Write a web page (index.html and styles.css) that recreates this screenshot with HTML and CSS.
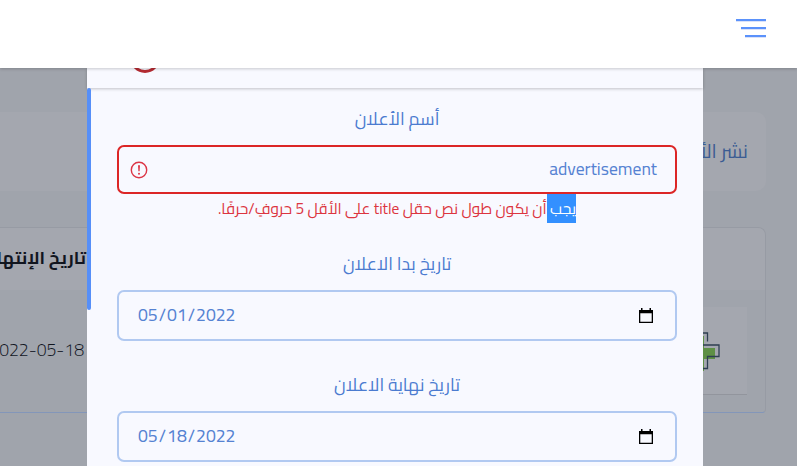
FILE: index.html
```html
<!DOCTYPE html>
<html lang="ar" dir="rtl">
<head>
<meta charset="utf-8">
<title>نشر الأعلان</title>
<link rel="stylesheet" href="styles.css">
</head>
<body>
<header class="topbar">
  <button class="menu" aria-label="القائمة"><i></i><i></i><i></i></button>
</header>
<main class="page">
  <section class="title-card"><h1>نشر الأعلان</h1></section>
  <section class="table-card">
    <div class="row head"><b class="cell-end">تاريخ الإنتهاء</b></div>
    <div class="row">
      <div class="thumb">
        <svg width="60" height="60" viewBox="0 0 60 60"><path fill="#5e9045" d="M15 15h16v12h11v11H31v12H15z"/><path fill="none" stroke="#2e3f52" stroke-width="1.3" d="M24 12h10.500v8.500M28 24h18v11.500H34.500v12H25"/></svg>
      </div>
      <span class="cell-end date">2022-05-18</span>
    </div>
  </section>
</main>
<div class="modal">
  <div class="modal-head"><div class="clip"><span class="close"></span></div></div>
  <form class="form">
    <div class="field">
      <label class="label">أسم الأعلان</label>
      <div class="input invalid">
        <span class="value">advertisement</span>
        <svg class="warn" width="18" height="18" viewBox="0 0 18 18"><circle cx="9" cy="9" r="7.700" fill="none" stroke="#dc3545" stroke-width="1.400"/><path d="M8 4.300h2l-.4 6H8.400z" fill="#dc3545"/><circle cx="9" cy="12.800" r="1" fill="#dc3545"/></svg>
      </div>
      <p class="error"><span><mark>يجب </mark>أن يكون طول نص حقل title على الأقل 5 حروفٍ/حرفًا.</span></p>
    </div>
    <div class="field">
      <label class="label">تاريخ بدا الاعلان</label>
      <div class="input" dir="ltr">
        <span class="value num"><span>05</span>/<span>01</span>/<span>2022</span></span>
        <svg class="cal" width="16" height="18" viewBox="0 0 16 18"><path d="M1 3h14v13H1zM2.300 6.300v8.400h11.400V6.300z" fill="#000" fill-rule="evenodd"/><path d="M3 1h1.500v3H3zM11.500 1H13v3h-1.500z" fill="#000"/></svg>
      </div>
    </div>
    <div class="field">
      <label class="label">تاريخ نهاية الاعلان</label>
      <div class="input" dir="ltr">
        <span class="value num"><span>05</span>/<span>18</span>/<span>2022</span></span>
        <svg class="cal" width="16" height="18" viewBox="0 0 16 18"><path d="M1 3h14v13H1zM2.300 6.300v8.400h11.400V6.300z" fill="#000" fill-rule="evenodd"/><path d="M3 1h1.500v3H3zM11.500 1H13v3h-1.500z" fill="#000"/></svg>
      </div>
    </div>
  </form>
  <span class="scroll-thumb"></span>
</div>
</body>
</html>
```
FILE: styles.css
```css
* { box-sizing: border-box; }
body { margin: 0; height: 466px; overflow: hidden; position: relative; background: #a0a4ac; font-family: Cairo, "Noto Sans", "Noto Sans Arabic", "DejaVu Sans", sans-serif; }
.topbar { position: relative; z-index: 3; height: 68px; background: #fff; box-shadow: 0 1px 3px rgba(0,0,0,.2); padding: 19px 31px; }
.menu { display: flex; flex-direction: column; align-items: flex-end; gap: 6px; border: 0; padding: 0; background: none; width: 30px; direction: ltr; }
.menu i { height: 2px; width: 30px; background: #5b92fb; box-shadow: 0 1px 0 #dbe2f8; }
.menu i:nth-child(2) { width: 25px; }
.menu i:nth-child(3) { width: 21px; }
.page { padding: 44px 31px 0 0; }
.title-card { height: 79px; background: #a4a7af; border-radius: 0 10px 10px 0; padding-right: 18px; display: flex; align-items: center; }
h1 { margin: 0; font-size: 19.2px; font-weight: 400; color: #3b5c93; position: relative; top: -1px; }
.table-card { margin-top: 36px; height: 186px; border: 1px solid #979ba4; border-left: 0; border-bottom-color: #8396b9; border-radius: 0 8px 4px 0; overflow: hidden; }
.row { display: flex; align-items: center; height: 122px; padding-right: 18px; color: #11151f; }
.head { height: 62px; background: #a4a7af; }
.thumb { width: 88px; height: 88px; background: #a4a7af; border-bottom: 1px solid #92959d; display: flex; justify-content: center; align-items: center; }
.cell-end { width: 86px; white-space: nowrap; margin-right: auto; font-size: 17.6px; line-height: 32px; margin-bottom: 2px; }
.date { direction: ltr; display: flex; justify-content: flex-end; width: 84px; font-size: 17.6px; font-weight: 300; }
.modal { position: absolute; z-index: 2; left: 87px; top: 68px; width: 616px; height: 398px; background: #f8f9ff; }
.modal-head { height: 20px; box-shadow: 0 1px 3px rgba(0,0,0,.22); }
.clip { height: 20px; overflow: hidden; display: flex; justify-content: flex-end; align-items: flex-end; padding: 0 43px 15px; }
.close { flex: none; width: 30px; height: 30px; border: 3px solid #b52b32; border-radius: 50%; }
.form { padding: 12px 26px 0 30px; }
.field { height: 121px; }
.field:first-child { height: 145px; }
.label { display: flex; justify-content: center; align-items: center; height: 36px; margin-bottom: 9px; color: #4b7bd0; font-size: 17.6px; }
.input { height: 51px; border: 2px solid #b1c9f1; border-radius: 7px; padding: 0 18px; display: flex; align-items: center; justify-content: space-between; color: #5582d2; font-size: 17.6px; }
.input.invalid { height: 49px; border-color: #dc2626; padding-left: 11px; }
.value { position: relative; top: -1px; }
.num span { padding: 0 1px; }
.cal { margin-right: 3px; }
.error { margin: 0; display: flex; justify-content: center; height: 29px; line-height: 29px; font-size: 15.4px; color: #dc3540; white-space: nowrap; }
.error mark { display: inline-block; height: 29px; background: #3390ff; color: #fff; white-space: pre; }
.scroll-thumb { position: absolute; left: 0; top: 20px; width: 4px; height: 222px; border-radius: 2px; background: #568ff8; }
```
